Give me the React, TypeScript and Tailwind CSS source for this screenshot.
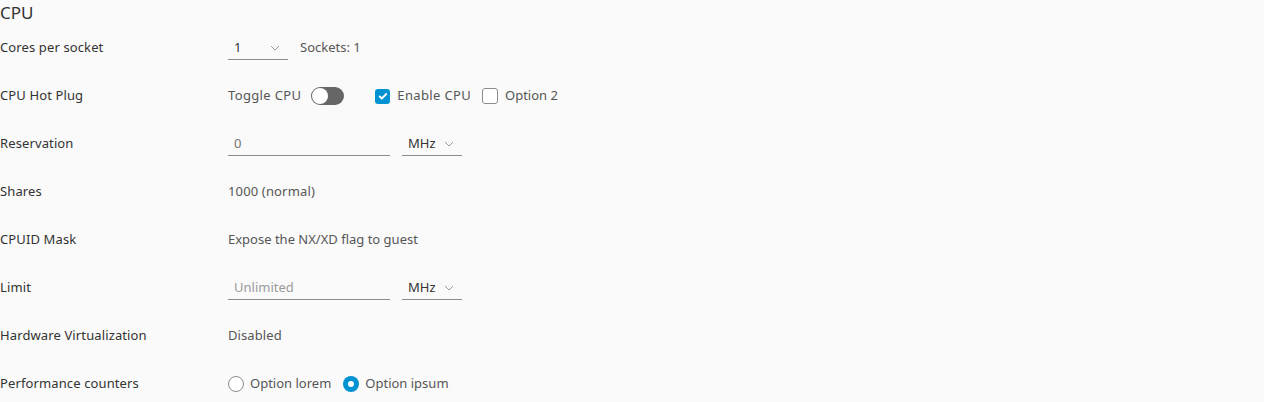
import React from "react";

const font = { fontFamily: "'Noto Sans', 'Open Sans', sans-serif" };

function Chevron() {
  return (
    <svg width="10" height="6" viewBox="0 0 10 6" className="text-[#9a9a9a]">
      <path d="M1 1 L5 5 L9 1" fill="none" stroke="currentColor" strokeWidth="1" />
    </svg>
  );
}

function Select({ value, width }: { value: string; width: string }) {
  return (
    <div className={`${width} h-[24px] flex items-center justify-between pl-[6px] pr-[8px] border-b border-[#8c8c8c] text-[13px] text-[#333]`}>
      <span>{value}</span>
      <Chevron />
    </div>
  );
}

function Row({ label, children }: { label: string; children?: React.ReactNode }) {
  return (
    <div className="h-[48px] flex items-center">
      <div className="w-[228px] text-[13px] text-[#333] shrink-0 tracking-[0.12px]">{label}</div>
      <div className="flex items-center text-[13px] text-[#565656]">{children}</div>
    </div>
  );
}

export default function App() {
  return (
    <div className="w-[1264px] h-[402px] bg-[#fafafa] overflow-hidden" style={font}>
      <div className="h-[24px] flex items-center text-[17px] text-[#333] leading-none">CPU</div>
      <Row label="Cores per socket">
        <Select value="1" width="w-[60px]" />
        <span className="ml-[12px]">Sockets: 1</span>
      </Row>
      <Row label="CPU Hot Plug">
        <span className="tracking-[0.35px]">Toggle CPU</span>
        <div className="ml-[10px] w-[33px] h-[18px] rounded-full bg-[#666] relative">
          <div className="absolute left-[1px] top-[1px] w-[16px] h-[16px] rounded-full bg-white" />
        </div>
        <div className="ml-[31px] w-[15px] h-[15px] rounded-[3px] bg-[#0092d1] flex items-center justify-center">
          <svg width="10" height="8" viewBox="0 0 10 8">
            <path d="M1.2 4 L3.8 6.5 L8.8 1.5" fill="none" stroke="white" strokeWidth="1.8" />
          </svg>
        </div>
        <span className="ml-[7px] tracking-[0.35px]">Enable CPU</span>
        <div className="ml-[11px] w-[16px] h-[16px] rounded-[3px] border border-[#8c8c8c] bg-white" />
        <span className="ml-[7px]">Option 2</span>
      </Row>
      <Row label="Reservation">
        <div className="w-[162px] h-[24px] flex items-center pl-[6px] border-b border-[#8c8c8c] text-[#737373]">0</div>
        <div className="ml-[12px]">
          <Select value="MHz" width="w-[60px]" />
        </div>
      </Row>
      <Row label="Shares">
        <span className="tracking-[0.15px]">1000 (normal)</span>
      </Row>
      <Row label="CPUID Mask">
        <span>Expose the NX/XD flag to guest</span>
      </Row>
      <Row label="Limit">
        <div className="w-[162px] h-[24px] flex items-center pl-[6px] border-b border-[#8c8c8c] text-[#9a9a9a]">Unlimited</div>
        <div className="ml-[12px]">
          <Select value="MHz" width="w-[60px]" />
        </div>
      </Row>
      <Row label="Hardware Virtualization">
        <span className="tracking-[0.1px]">Disabled</span>
      </Row>
      <Row label="Performance counters">
        <div className="w-[16px] h-[16px] rounded-full border border-[#8c8c8c] bg-white" />
        <span className="ml-[6px]">Option lorem</span>
        <div className="ml-[12px] w-[16px] h-[16px] rounded-full bg-[#0092d1] flex items-center justify-center">
          <div className="w-[6px] h-[6px] rounded-full bg-white" />
        </div>
        <span className="ml-[6px]">Option ipsum</span>
      </Row>
    </div>
  );
}
